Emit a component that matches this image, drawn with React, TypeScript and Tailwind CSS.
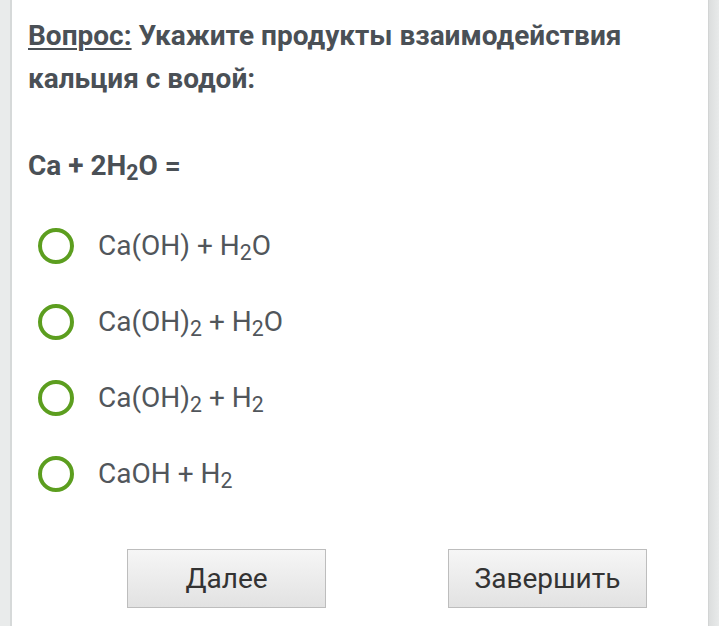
import React from 'react';

const Sub = () => <sub className="text-[0.76em]">2</sub>;

const options = [
  <>Ca(OH) + H<Sub />O</>,
  <>Ca(OH)<Sub /> + H<Sub />O</>,
  <>Ca(OH)<Sub /> + H<Sub /></>,
  <>CaOH + H<Sub /></>,
];

export default function App() {
  return (
    <div className="flex h-[626px] w-[719px] overflow-hidden bg-white font-['Roboto',sans-serif]">
      <div className="w-[12px] shrink-0 border-r-2 border-[#d6d9d9] bg-[#e9ebeb]" />

      <div className="flex flex-1 flex-col pl-[16px] pt-[14px]">
        <h1 className="text-[28px] font-bold leading-[43px] text-[#4a5056]">
          <span className="underline decoration-2 underline-offset-[3px]">Вопрос:</span> Укажите продукты взаимодействия
          <br />
          кальция с водой:
        </h1>

        <p className="mt-[46px] text-[28px] font-bold leading-[39px] text-[#4a5056]">
          Ca + 2H<Sub />O =
        </p>

        <div className="mt-[23px] flex flex-col">
          {options.map((opt, i) => (
            <div key={i} className="flex h-[76px] items-center">
              <div className="ml-[10px] h-[36px] w-[36px] rounded-full border-[4px] border-[#5c9e1f]" />
              <span className="ml-[24px] text-[28px] leading-none text-[#51565b]">{opt}</span>
            </div>
          ))}
        </div>

        <div className="mt-[37px] flex">
          <button className="ml-[99px] h-[59px] w-[199px] border border-[#bdbdbd] bg-gradient-to-b from-[#f6f6f6] to-[#e2e2e2] text-[28px] text-[#333333]">
            Далее
          </button>
          <button className="ml-[122px] h-[59px] w-[199px] border border-[#bdbdbd] bg-gradient-to-b from-[#f6f6f6] to-[#e2e2e2] text-[28px] text-[#333333]">
            Завершить
          </button>
        </div>
      </div>

      <div className="w-[11px] shrink-0 border-l border-[#d2d4d4] bg-gradient-to-r from-[#dcdede] to-[#e8eaea]" />
    </div>
  );
}
